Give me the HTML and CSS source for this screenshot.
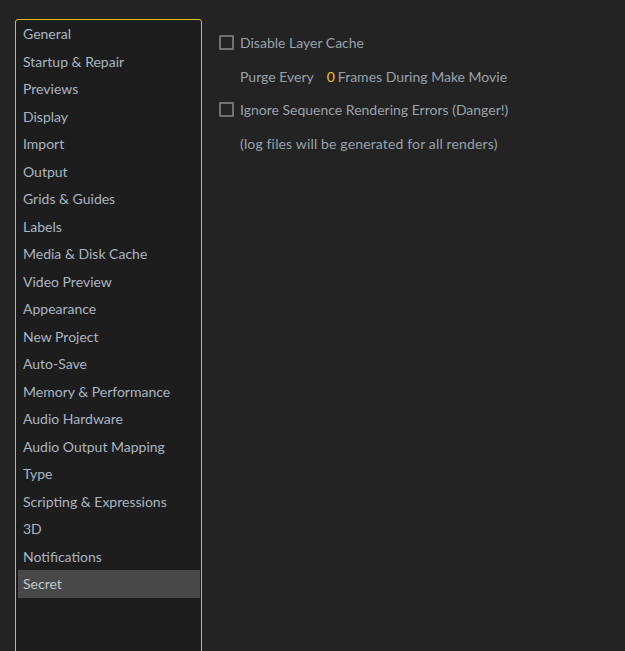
FILE: index.html
```html
<!DOCTYPE html>
<html>
<head>
<meta charset="utf-8">
<link rel="stylesheet" href="styles.css">
</head>
<body>
<div class="prefs">
  <ul class="nav">
    <li>General</li>
    <li>Startup &amp; Repair</li>
    <li>Previews</li>
    <li>Display</li>
    <li>Import</li>
    <li>Output</li>
    <li>Grids &amp; Guides</li>
    <li>Labels</li>
    <li>Media &amp; Disk Cache</li>
    <li>Video Preview</li>
    <li>Appearance</li>
    <li>New Project</li>
    <li>Auto-Save</li>
    <li>Memory &amp; Performance</li>
    <li>Audio Hardware</li>
    <li>Audio Output Mapping</li>
    <li>Type</li>
    <li>Scripting &amp; Expressions</li>
    <li>3D</li>
    <li>Notifications</li>
    <li class="selected">Secret</li>
  </ul>
  <div class="panel">
    <div class="row"><span class="check"></span><span>Disable Layer Cache</span></div>
    <div class="row indent"><span>Purge Every</span><span class="num">0</span><span>Frames During Make Movie</span></div>
    <div class="row"><span class="check"></span><span>Ignore Sequence Rendering Errors (Danger!)</span></div>
    <div class="row indent"><span class="wide">(log files will be generated for all renders)</span></div>
  </div>
</div>
</body>
</html>
```
FILE: styles.css
```css
html, body {
  margin: 0;
  padding: 0;
  background: #232323;
  height: 100%;
  overflow: hidden;
}
body {
  font-family: Lato, "Noto Sans", sans-serif;
  font-size: 14px;
}
.prefs {
  display: flex;
  padding: 19px 0 0 15px;
  gap: 16px;
}
.nav {
  list-style: none;
  margin: 0;
  padding: 0 1px 0 2px;
  width: 182px;
  height: 660px;
  border: 1px solid #e2bb12;
  border-radius: 3px;
  background: #1d1d1d;
  flex: none;
}
.nav li {
  height: 27.5px;
  line-height: 27.5px;
  padding-left: 5px;
  color: #aab5c3;
  white-space: nowrap;
}
.nav li.selected {
  background: #484848;
  color: #c0c8d2;
}
.panel {
  padding-top: 7px;
  padding-left: 1px;
  color: #98a2ad;
}
.row {
  height: 33.5px;
  display: flex;
  align-items: center;
  gap: 6px;
}
.row.indent {
  padding-left: 21px;
}
.check {
  width: 11px;
  height: 11px;
  border: 2px solid #717171;
  border-radius: 1px;
  flex: none;
}
.num {
  color: #f2c80f;
  margin-left: 7px;
  margin-right: -3px;
}
.wide {
  letter-spacing: 0.15px;
}
```
